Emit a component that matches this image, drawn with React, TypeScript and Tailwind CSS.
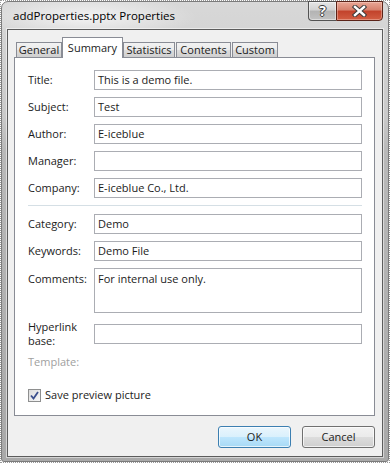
import React from "react";

const tabs = [
  { name: "General", w: "w-[46px]", active: false, gap: "" },
  { name: "Summary", w: "w-[61px]", active: true, gap: "" },
  { name: "Statistics", w: "w-[52px]", active: false, gap: "" },
  { name: "Contents", w: "w-[55px]", active: false, gap: "ml-[1px]" },
  { name: "Custom", w: "w-[46px]", active: false, gap: "ml-[1px]" },
];

const fields = [
  { label: "Title:", value: "This is a demo file." },
  { label: "Subject:", value: "Test" },
  { label: "Author:", value: "E-iceblue" },
  { label: "Manager:", value: "" },
  { label: "Company:", value: "E-iceblue Co., Ltd." },
];

function Field({ label, value }: { label: string; value: string }) {
  return (
    <div className="mb-[7px] flex h-[20px] items-center">
      <span className="w-[66px] shrink-0">{label}</span>
      <div className="flex h-[20px] w-[268px] items-center border border-[#abadb3] bg-white px-[3px]">
        {value}
      </div>
    </div>
  );
}

function TitleButtons() {
  return (
    <div className="absolute right-[5px] top-[-1px] flex h-[20px]">
      <div className="flex w-[28px] items-center justify-center rounded-bl-[4px] border border-r-0 border-[#535353] bg-[linear-gradient(to_bottom,#e6e6e6,#d2d2d2_45%,#b3b3b3_50%,#c2c2c2)] shadow-[inset_0_0_0_1px_rgba(255,255,255,0.45)]">
        <span className="text-[14px] font-bold leading-none text-white [text-shadow:-1px_0_#3a3a3a,1px_0_#3a3a3a,0_-1px_#3a3a3a,0_1px_#3a3a3a]">
          ?
        </span>
      </div>
      <div className="flex w-[47px] items-center justify-center rounded-br-[4px] border border-[#5b2318] bg-[linear-gradient(to_bottom,#e9a796,#d6806c_45%,#c2422b_50%,#d25e43)] shadow-[inset_0_0_0_1px_rgba(255,220,210,0.4)]">
        <svg width="15" height="12" viewBox="0 0 15 12">
          <path d="M3 2 L12 10 M12 2 L3 10" stroke="#3b3b3b" strokeWidth="4.4" strokeLinecap="square" />
          <path d="M3 2 L12 10 M12 2 L3 10" stroke="#ffffff" strokeWidth="2.4" strokeLinecap="square" />
        </svg>
      </div>
    </div>
  );
}

export default function App() {
  return (
    <div className="h-[463px] w-[390px] border border-dotted border-[#9a9a9a] bg-white font-['Segoe_UI','Open_Sans',sans-serif] text-[11px] text-[#1b1b1b]">
      <div className="relative flex h-full w-full flex-col rounded-t-[7px] rounded-b-[3px] border border-[#7b7b7b] bg-[radial-gradient(ellipse_110px_22px_at_85px_15px,rgba(255,255,255,0.7),transparent),linear-gradient(to_bottom,#d8d8d8,#cacaca_25%,#b9b9b9_32%,#a9a9a9_100%)] px-[5px] pb-[4px]">
        <div className="flex h-[27px] shrink-0 items-center pl-[6px] text-[11.5px] text-black">
          addProperties.pptx Properties
        </div>
        <TitleButtons />

        <div className="flex flex-1 flex-col border border-[#5c5c5c] bg-[#f0f0f0] pl-[6px] pt-[7px] shadow-[0_0_0_1px_rgba(255,255,255,0.5)]">
          <div className="relative z-10 -mb-px flex h-[21px] items-end pl-[2px]">
            {tabs.map((t) =>
              t.active ? (
                <div
                  key={t.name}
                  className={`${t.w} flex h-[21px] justify-center border border-b-0 border-[#898c95] bg-white pt-[2px]`}
                >
                  {t.name}
                </div>
              ) : (
                <div
                  key={t.name}
                  className={`${t.w} ${t.gap} flex h-[16px] items-center justify-center border border-[#898c95] bg-[linear-gradient(to_bottom,#f2f2f2,#ebebeb_50%,#dddddd_50%,#cfcfcf)] pt-[1px]`}
                >
                  {t.name}
                </div>
              )
            )}
          </div>

          <div className="h-[359px] w-[361px] border border-[#898c95] bg-white pl-[13px] pt-[12px]">
            {fields.map((f) => (
              <Field key={f.label} label={f.label} value={f.value} />
            ))}
            <div className="mb-[8px] mt-[3px] h-px w-[334px] bg-[#d5dfe5]" />
            <Field label="Category:" value="Demo" />
            <Field label="Keywords:" value="Demo File" />
            <div className="mb-[7px] flex">
              <span className="mt-[3px] w-[66px] shrink-0 leading-[15px]">Comments:</span>
              <div className="h-[45px] w-[268px] border border-[#abadb3] bg-white px-[3px] pt-[2px] leading-[16px]">
                For internal use only.
              </div>
            </div>
            <div className="mb-[6px] flex items-center">
              <div className="flex w-[66px] shrink-0 flex-col leading-[14px]">
                <span>Hyperlink</span>
                <span>base:</span>
              </div>
              <div className="h-[20px] w-[268px] border border-[#abadb3] bg-white" />
            </div>
            <div className="leading-[15px] text-[#a0a0a0]">Template:</div>
            <div className="mt-[18px] flex items-center gap-[4px]">
              <div className="flex h-[13px] w-[13px] items-center justify-center border border-[#8e8f8f] bg-[linear-gradient(135deg,#dcdcdc,#f8f8f8)]">
                <svg width="9" height="9" viewBox="0 0 9 9">
                  <path d="M1 4.5 L3.5 7.5 L8 1" fill="none" stroke="#3b4f8d" strokeWidth="1.8" />
                </svg>
              </div>
              <span>Save preview picture</span>
            </div>
          </div>

          <div className="mt-[10px] flex w-[361px] justify-end gap-[11px]">
            <button
              type="button"
              className="h-[22px] w-[73px] rounded-[3px] border border-[#3c7fb1] bg-[linear-gradient(to_bottom,#eaf6fd,#d9f0fc_50%,#bee6fd_50%,#a7d9f5)] shadow-[inset_0_0_0_1px_rgba(255,255,255,0.7)]"
            >
              OK
            </button>
            <button
              type="button"
              className="h-[22px] w-[73px] rounded-[3px] border border-[#707070] bg-[linear-gradient(to_bottom,#f2f2f2,#ebebeb_50%,#dddddd_50%,#cfcfcf)] shadow-[inset_0_0_0_1px_rgba(255,255,255,0.7)]"
            >
              Cancel
            </button>
          </div>
        </div>
      </div>
    </div>
  );
}
